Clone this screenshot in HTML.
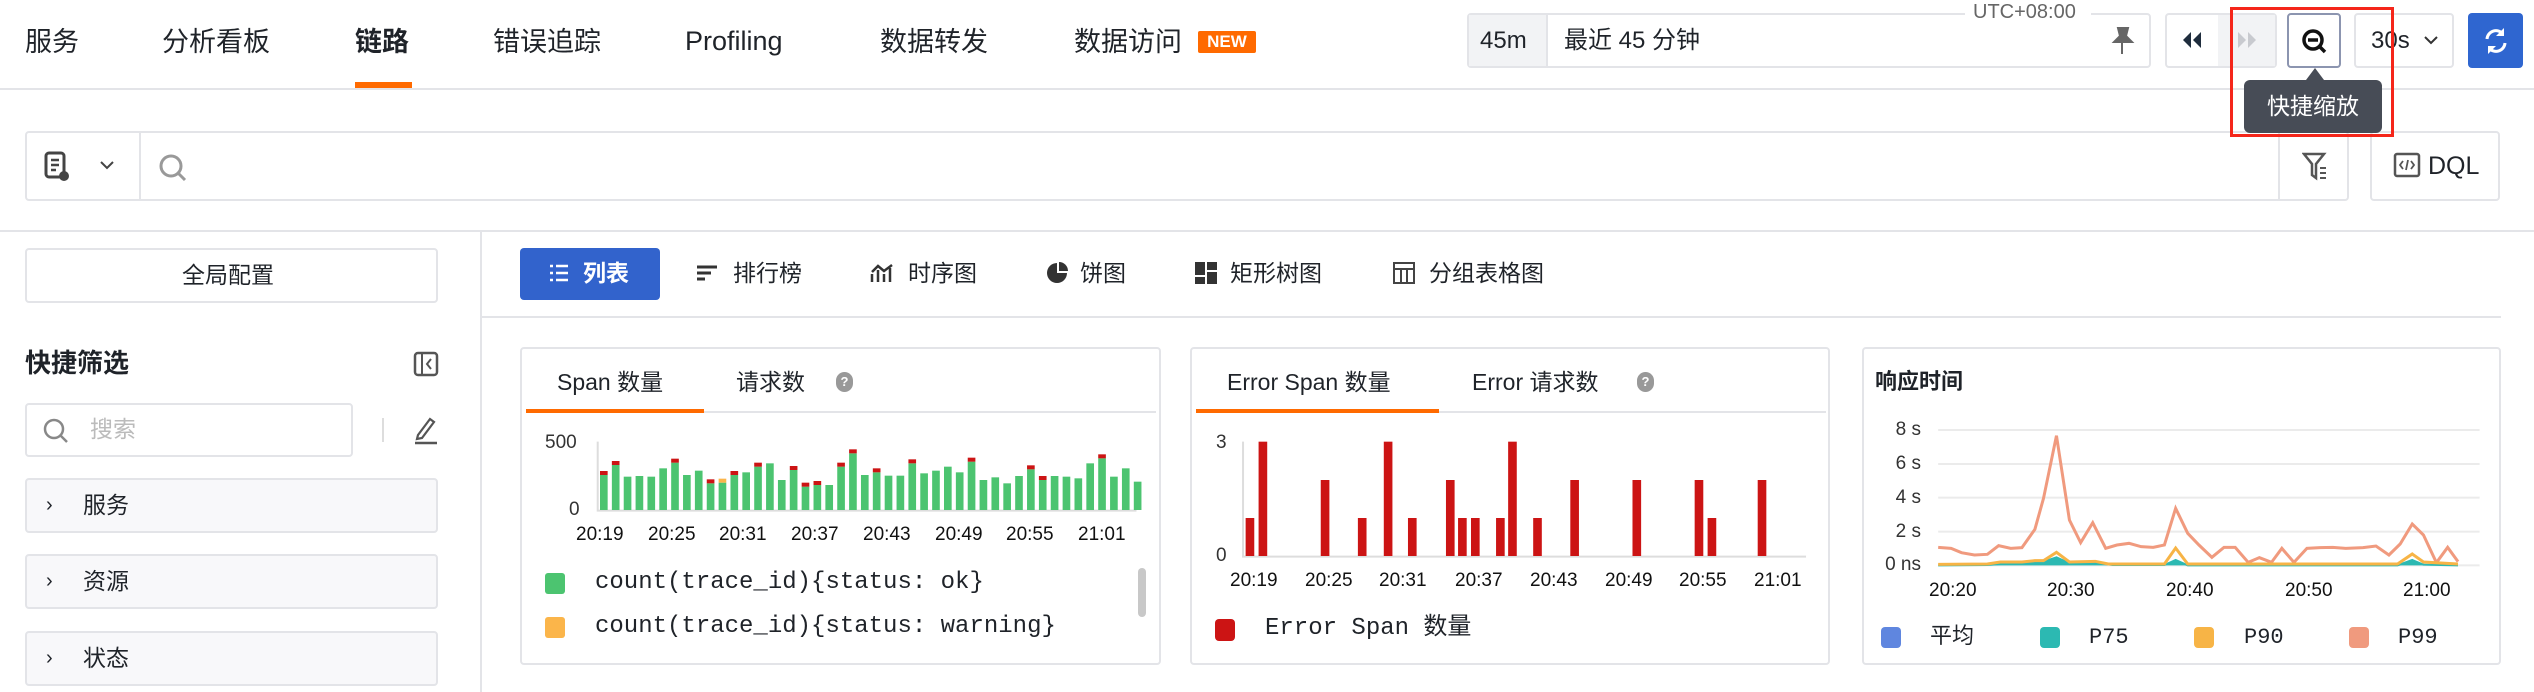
<!DOCTYPE html>
<html><head><meta charset="utf-8"><style>
*{margin:0;padding:0;box-sizing:border-box}
body{width:2534px;height:692px;overflow:hidden;background:#fff;position:relative;font-family:"Liberation Sans","Noto Sans CJK SC",sans-serif;color:#1f2329}
.a{position:absolute}
.t{position:absolute;white-space:nowrap;line-height:1}
.box{position:absolute;border:2px solid #e3e4e8;border-radius:4px;background:#fff}
.mono{font-family:"Liberation Mono","Noto Sans CJK SC",monospace}
</style></head><body>
<!-- top nav -->
<div class="t" style="left:25px;top:29px;font-size:27px">服务</div>
<div class="t" style="left:162px;top:29px;font-size:27px">分析看板</div>
<div class="t" style="left:355px;top:29px;font-size:27px;font-weight:bold">链路</div>
<div class="t" style="left:493px;top:29px;font-size:27px">错误追踪</div>
<div class="t" style="left:685px;top:28px;font-size:27px">Profiling</div>
<div class="t" style="left:880px;top:29px;font-size:27px">数据转发</div>
<div class="t" style="left:1074px;top:29px;font-size:27px">数据访问</div>
<div class="a" style="left:1198px;top:31px;width:58px;height:22px;background:#ff6a00;border-radius:2px;color:#fff;font-size:17px;font-weight:bold;text-align:center;line-height:22px">NEW</div>
<div class="a" style="left:355px;top:82px;width:57px;height:6px;background:#ff6a00"></div>
<div class="a" style="left:0;top:88px;width:2534px;height:2px;background:#e3e4e8"></div>

<!-- time picker -->
<div class="box" style="left:1467px;top:13px;width:684px;height:55px"></div>
<div class="a" style="left:1469px;top:15px;width:79px;height:51px;background:#f2f3f5;border-right:2px solid #e3e4e8"></div>
<div class="t" style="left:1480px;top:29px;font-size:24px">45m</div>
<div class="t" style="left:1564px;top:29px;font-size:24px">最近 45 分钟</div>
<div class="a" style="left:1965px;top:2px;width:126px;height:22px;background:#fff"></div>
<div class="t" style="left:1973px;top:2px;font-size:20px;color:#666">UTC+08:00</div>
<svg class="a" style="left:2110px;top:26px" width="26" height="30" viewBox="0 0 26 30"><path d="M8 2h10l-2 8 6 6H4l6-6z M12 16v12" fill="#666" stroke="#666" stroke-width="2"/></svg>
<div class="box" style="left:2165px;top:13px;width:112px;height:55px"></div>
<div class="a" style="left:2218px;top:15px;width:57px;height:51px;background:#f2f3f5"></div>
<svg class="a" style="left:2180px;top:32px" width="24" height="16"><path d="M11 0v16L3 8z M21 0v16L13 8z" fill="#1f2d3d"/></svg>
<svg class="a" style="left:2235px;top:32px" width="24" height="16"><path d="M3 0v16l8-8z M13 0v16l8-8z" fill="#c8cacf"/></svg>
<div class="a" style="left:2287px;top:13px;width:54px;height:55px;border:2px solid #8c95b0;border-radius:4px;background:#fff"></div>
<svg class="a" style="left:2301px;top:28px" width="28" height="28" viewBox="0 0 28 28"><circle cx="12" cy="12" r="9" fill="none" stroke="#111" stroke-width="3.5"/><path d="M7 12h10M18 18l6 6" stroke="#111" stroke-width="3.5"/></svg>
<div class="box" style="left:2354px;top:13px;width:100px;height:55px"></div>
<div class="t" style="left:2371px;top:29px;font-size:24px">30s</div>
<svg class="a" style="left:2424px;top:35px" width="14" height="10"><path d="M1 2l6 6 6-6" fill="none" stroke="#333" stroke-width="2"/></svg>
<div class="a" style="left:2468px;top:13px;width:55px;height:55px;background:#2f66d0;border-radius:4px"></div>
<svg class="a" style="left:2482px;top:26px" width="28" height="30" viewBox="0 0 28 30"><path d="M5 13a9 9 0 0 1 16-5M23 17a9 9 0 0 1-16 5" fill="none" stroke="#fff" stroke-width="3"/><path d="M22 2v8h-8z M6 28v-8h8z" fill="#fff"/></svg>

<!-- search -->
<div class="box" style="left:25px;top:131px;width:2324px;height:70px"></div>
<div class="a" style="left:139px;top:133px;width:2px;height:66px;background:#e3e4e8"></div>
<svg class="a" style="left:44px;top:151px" width="26" height="32" viewBox="0 0 26 32"><rect x="2" y="2" width="18" height="24" rx="3" fill="none" stroke="#444" stroke-width="3"/><path d="M7 9h8M7 14h8M7 19h5" stroke="#444" stroke-width="2.5"/><circle cx="20" cy="25" r="5" fill="#444"/></svg>
<svg class="a" style="left:100px;top:160px" width="14" height="10"><path d="M1 2l6 6 6-6" fill="none" stroke="#444" stroke-width="2"/></svg>
<svg class="a" style="left:157px;top:152px" width="32" height="32"><circle cx="14" cy="14" r="10" fill="none" stroke="#999" stroke-width="3"/><path d="M21 21l7 7" stroke="#999" stroke-width="3"/></svg>
<div class="a" style="left:2278px;top:133px;width:2px;height:66px;background:#e3e4e8"></div>
<svg class="a" style="left:2302px;top:152px" width="26" height="30"><path d="M2 2h20l-8 10v14l-4-3V12z" fill="none" stroke="#555" stroke-width="2.5"/><path d="M18 16h6M18 21h6M18 26h6" stroke="#555" stroke-width="2"/></svg>
<div class="box" style="left:2370px;top:131px;width:130px;height:70px"></div>
<svg class="a" style="left:2393px;top:152px" width="28" height="26"><rect x="2" y="2" width="24" height="22" rx="2" fill="none" stroke="#555" stroke-width="2.5"/><path d="M10 9l-3 4 3 4M18 9l3 4-3 4M15 8l-2 10" fill="none" stroke="#555" stroke-width="1.8"/></svg>
<div class="t" style="left:2428px;top:154px;font-size:25px">DQL</div>

<!-- tooltip + highlight (on top) -->
<div class="a" style="left:2306px;top:68px;width:0;height:0;border-left:9px solid transparent;border-right:9px solid transparent;border-bottom:12px solid #474c56;z-index:10"></div>
<div class="a" style="left:2244px;top:80px;width:138px;height:53px;background:#474c56;border-radius:6px;color:#fff;font-size:23px;text-align:center;line-height:53px;z-index:10">快捷缩放</div>
<div class="a" style="left:2230px;top:7px;width:164px;height:130px;border:3px solid #f5261a;z-index:11"></div>

<div class="a" style="left:0;top:230px;width:2534px;height:2px;background:#e3e4e8"></div>
<div class="a" style="left:480px;top:231px;width:2px;height:461px;background:#e3e4e8"></div>

<!-- sidebar -->
<div class="box" style="left:25px;top:248px;width:413px;height:55px"></div>
<div class="t" style="left:182px;top:264px;font-size:23px">全局配置</div>
<div class="t" style="left:25px;top:350px;font-size:26px;font-weight:bold">快捷筛选</div>
<svg class="a" style="left:413px;top:351px" width="26" height="26"><rect x="2" y="2" width="22" height="22" rx="3" fill="none" stroke="#555" stroke-width="2.5"/><path d="M9 2v22M18 8l-4 5 4 5" fill="none" stroke="#555" stroke-width="2"/></svg>
<div class="box" style="left:25px;top:403px;width:328px;height:54px"></div>
<svg class="a" style="left:42px;top:417px" width="28" height="28"><circle cx="12" cy="12" r="9" fill="none" stroke="#888" stroke-width="2.5"/><path d="M19 19l6 6" stroke="#888" stroke-width="2.5"/></svg>
<div class="t" style="left:90px;top:418px;font-size:23px;color:#bbb">搜索</div>
<div class="a" style="left:382px;top:418px;width:2px;height:24px;background:#ddd"></div>
<svg class="a" style="left:412px;top:415px" width="28" height="30"><path d="M6 20L18 4l4 3L10 23l-5 1z" fill="none" stroke="#555" stroke-width="2.2"/><path d="M3 28h22" stroke="#555" stroke-width="2.5"/></svg>
<div class="box" style="left:25px;top:478px;width:413px;height:55px;background:#f8f8fa"></div>
<div class="t" style="left:46px;top:495px;font-size:20px">›</div>
<div class="t" style="left:83px;top:494px;font-size:23px">服务</div>
<div class="box" style="left:25px;top:554px;width:413px;height:55px;background:#f8f8fa"></div>
<div class="t" style="left:46px;top:571px;font-size:20px">›</div>
<div class="t" style="left:83px;top:570px;font-size:23px">资源</div>
<div class="box" style="left:25px;top:631px;width:413px;height:55px;background:#f8f8fa"></div>
<div class="t" style="left:46px;top:648px;font-size:20px">›</div>
<div class="t" style="left:83px;top:647px;font-size:23px">状态</div>

<!-- view tabs -->
<div class="a" style="left:520px;top:248px;width:140px;height:52px;background:#3263cc;border-radius:4px"></div>
<svg class="a" style="left:549px;top:263px" width="20" height="20"><path d="M1 3h3M7 3h12M1 10h3M7 10h12M1 17h3M7 17h12" stroke="#fff" stroke-width="2.5"/></svg>
<div class="t" style="left:583px;top:262px;font-size:23px;color:#fff;font-weight:bold">列表</div>
<svg class="a" style="left:697px;top:264px" width="22" height="20"><path d="M0 3h20M0 9h14M0 15h8" stroke="#333" stroke-width="3"/></svg>
<div class="t" style="left:733px;top:262px;font-size:23px">排行榜</div>
<svg class="a" style="left:870px;top:262px" width="24" height="22"><path d="M2 20V12M8 20V8M14 20V12M20 20V6M2 10l6-6 6 5 8-6" fill="none" stroke="#333" stroke-width="2.5"/></svg>
<div class="t" style="left:908px;top:262px;font-size:23px">时序图</div>
<svg class="a" style="left:1046px;top:262px" width="22" height="22"><path d="M11 1a10 10 0 1 0 10 10H11z" fill="#333"/><path d="M13 0a9 9 0 0 1 9 9h-9z" fill="#333"/></svg>
<div class="t" style="left:1080px;top:262px;font-size:23px">饼图</div>
<svg class="a" style="left:1195px;top:262px" width="22" height="22"><rect x="0" y="0" width="10" height="13" fill="#333"/><rect x="12" y="0" width="10" height="8" fill="#333"/><rect x="0" y="15" width="10" height="7" fill="#333"/><rect x="12" y="10" width="10" height="12" fill="#333"/></svg>
<div class="t" style="left:1230px;top:262px;font-size:23px">矩形树图</div>
<svg class="a" style="left:1393px;top:262px" width="22" height="22"><rect x="1" y="1" width="20" height="20" fill="none" stroke="#444" stroke-width="2"/><path d="M1 7h20M8 7v14M14 7v14" stroke="#444" stroke-width="2"/></svg>
<div class="t" style="left:1429px;top:262px;font-size:23px">分组表格图</div>
<div class="a" style="left:482px;top:316px;width:2019px;height:2px;background:#e3e4e8"></div>

<!-- card 1 -->
<div class="box" style="left:520px;top:347px;width:641px;height:318px"></div>
<div class="t" style="left:557px;top:371px;font-size:23px">Span 数量</div>
<div class="t" style="left:736px;top:371px;font-size:23px">请求数</div>
<div class="a" style="left:836px;top:372px;width:17px;height:20px;border-radius:9px;background:#999;color:#fff;font-size:13px;text-align:center;line-height:20px;font-weight:bold">?</div>
<div class="a" style="left:526px;top:411px;width:630px;height:2px;background:#e3e4e8"></div>
<div class="a" style="left:526px;top:409px;width:178px;height:4px;background:#ff6a00"></div>
<div class="t" style="left:545px;top:433px;font-size:19px;color:#333">500</div>
<div class="t" style="left:569px;top:500px;font-size:19px;color:#333">0</div>
<svg class="a" style="left:0;top:220px" width="1200" height="472" viewBox="0 0 1568 1416" preserveAspectRatio="none">
<path d="M781 665V872H1485" fill="none" stroke="#ddd" vector-effect="non-scaling-stroke" stroke-width="2"/>
<g id="bars1"></g>
</svg>
<div class="t" style="left:576px;top:525px;font-size:19px;color:#111"><span style="position:absolute;left:0">20:19</span><span style="position:absolute;left:72px">20:25</span><span style="position:absolute;left:143px">20:31</span><span style="position:absolute;left:215px">20:37</span><span style="position:absolute;left:287px">20:43</span><span style="position:absolute;left:359px">20:49</span><span style="position:absolute;left:430px">20:55</span><span style="position:absolute;left:502px">21:01</span></div>
<div class="a" style="left:545px;top:573px;width:20px;height:21px;border-radius:3px;background:#4cc470"></div>
<div class="t mono" style="left:595px;top:571px;font-size:24px">count(trace_id){status: ok}</div>
<div class="a" style="left:545px;top:617px;width:20px;height:21px;border-radius:3px;background:#fbb54a"></div>
<div class="t mono" style="left:595px;top:615px;font-size:24px">count(trace_id){status: warning}</div>
<div class="a" style="left:1138px;top:568px;width:8px;height:49px;border-radius:4px;background:#c8c8c8"></div>

<!-- card 2 -->
<div class="box" style="left:1190px;top:347px;width:640px;height:318px"></div>
<div class="t" style="left:1227px;top:371px;font-size:23px">Error Span 数量</div>
<div class="t" style="left:1472px;top:371px;font-size:23px">Error 请求数</div>
<div class="a" style="left:1637px;top:372px;width:17px;height:20px;border-radius:9px;background:#999;color:#fff;font-size:13px;text-align:center;line-height:20px;font-weight:bold">?</div>
<div class="a" style="left:1196px;top:411px;width:630px;height:2px;background:#e3e4e8"></div>
<div class="a" style="left:1196px;top:409px;width:243px;height:4px;background:#ff6a00"></div>
<div class="t" style="left:1216px;top:433px;font-size:19px;color:#333">3</div>
<div class="t" style="left:1216px;top:546px;font-size:19px;color:#333">0</div>
<svg class="a" style="left:1180px;top:220px" width="1354" height="472" viewBox="0 0 1568 1416" preserveAspectRatio="none">
<path d="M73 665V1010H725" fill="none" stroke="#ddd" vector-effect="non-scaling-stroke" stroke-width="2"/>
<g fill="#cc1414">
<rect x="76" y="894" width="10" height="114"/><rect x="91" y="665" width="10" height="343"/><rect x="163" y="780" width="10" height="228"/><rect x="206" y="894" width="10" height="114"/><rect x="236" y="665" width="10" height="343"/><rect x="264" y="894" width="10" height="114"/><rect x="308" y="780" width="10" height="228"/><rect x="322" y="894" width="10" height="114"/><rect x="337" y="894" width="10" height="114"/><rect x="366" y="894" width="10" height="114"/><rect x="380" y="665" width="10" height="343"/><rect x="409" y="894" width="10" height="114"/><rect x="452" y="780" width="10" height="228"/><rect x="524" y="780" width="10" height="228"/><rect x="596" y="780" width="10" height="228"/><rect x="611" y="894" width="10" height="114"/><rect x="669" y="780" width="10" height="228"/>
</g></svg>
<div class="t" style="left:1230px;top:571px;font-size:19px;color:#111"><span style="position:absolute;left:0">20:19</span><span style="position:absolute;left:75px">20:25</span><span style="position:absolute;left:149px">20:31</span><span style="position:absolute;left:225px">20:37</span><span style="position:absolute;left:300px">20:43</span><span style="position:absolute;left:375px">20:49</span><span style="position:absolute;left:449px">20:55</span><span style="position:absolute;left:524px">21:01</span></div>
<div class="a" style="left:1215px;top:619px;width:20px;height:22px;border-radius:4px;background:#cc1414"></div>
<div class="t mono" style="left:1265px;top:617px;font-size:24px">Error Span 数量</div>

<!-- card 3 -->
<div class="box" style="left:1862px;top:347px;width:639px;height:318px"></div>
<div class="t" style="left:1875px;top:371px;font-size:22px;font-weight:bold">响应时间</div>
<div class="t" style="left:1893px;top:420px;font-size:19px;color:#333;text-align:right;width:28px">8 s</div>
<div class="t" style="left:1893px;top:454px;font-size:19px;color:#333;text-align:right;width:28px">6 s</div>
<div class="t" style="left:1893px;top:488px;font-size:19px;color:#333;text-align:right;width:28px">4 s</div>
<div class="t" style="left:1893px;top:522px;font-size:19px;color:#333;text-align:right;width:28px">2 s</div>
<div class="t" style="left:1876px;top:555px;font-size:19px;color:#333;text-align:right;width:45px">0 ns</div>
<svg class="a" style="left:1180px;top:220px" width="1354" height="472" viewBox="0 0 1568 1416" preserveAspectRatio="none">
<path d="M878 630H1505M878 732H1505M878 833H1505M878 935H1505M878 1036H1505" stroke="#ebebeb" stroke-width="2" vector-effect="non-scaling-stroke"/>
<path d="M878 982L893 985L905 998L920 1005L935 1003L948 977L962 985L975 983L990 928L1000 835L1015 647L1030 900L1043 968L1057 908L1072 985L1085 975L1099 970L1113 980L1127 982L1140 975L1153 865L1167 940L1180 975L1195 1012L1209 982L1222 982L1237 1027L1250 1013L1264 1027L1276 985L1290 1027L1305 985L1320 983L1335 982L1350 985L1370 983L1385 978L1400 1005L1413 972L1427 912L1440 945L1455 1028L1468 982L1480 1025" fill="none" stroke="#f09a7e" stroke-width="3" vector-effect="non-scaling-stroke"/>
<path d="M878 1036L935 1035L960 1030L1000 1025L1015 1012L1030 1030L1060 1028L1080 1035L1140 1035L1153 1020L1167 1036L1410 1036L1427 1020L1440 1034L1480 1036" fill="#2cb9b2" stroke="#2cb9b2" stroke-width="2" vector-effect="non-scaling-stroke"/>
<path d="M878 1033L935 1032L950 1026L975 1026L990 1022L1000 1022L1015 997L1030 1026L1060 1024L1075 1032L1140 1032L1153 984L1167 1032L1410 1032L1427 1002L1440 1026L1480 1032" fill="none" stroke="#f7b446" stroke-width="3" vector-effect="non-scaling-stroke"/>
</svg>
<div class="t" style="left:1929px;top:581px;font-size:19px;color:#111"><span style="position:absolute;left:0">20:20</span><span style="position:absolute;left:118px">20:30</span><span style="position:absolute;left:237px">20:40</span><span style="position:absolute;left:356px">20:50</span><span style="position:absolute;left:474px">21:00</span></div>
<div class="a" style="left:1881px;top:627px;width:20px;height:21px;border-radius:4px;background:#5f86df"></div>
<div class="t mono" style="left:1930px;top:627px;font-size:22px">平均</div>
<div class="a" style="left:2040px;top:627px;width:20px;height:21px;border-radius:4px;background:#2cb9b2"></div>
<div class="t mono" style="left:2089px;top:627px;font-size:22px">P75</div>
<div class="a" style="left:2194px;top:627px;width:20px;height:21px;border-radius:4px;background:#f7b446"></div>
<div class="t mono" style="left:2244px;top:627px;font-size:22px">P90</div>
<div class="a" style="left:2349px;top:627px;width:20px;height:21px;border-radius:4px;background:#f09a7e"></div>
<div class="t mono" style="left:2398px;top:627px;font-size:22px">P99</div>

<script>
var tops=[765,735,770,768,770,745,728,765,752,790,788,765,757,740,730,780,750,800,795,795,740,700,765,757,767,767,730,760,752,740,757,725,780,772,790,768,748,780,768,770,775,730,715,770,745,785];
var red={0:1,1:1,6:1,9:1,11:1,13:1,16:1,17:1,18:1,20:1,21:1,23:1,26:1,31:1,36:1,37:1,42:1};
var s='';
for(var i=0;i<tops.length;i++){var x=784+i*15.5;var t=tops[i];
s+='<rect x="'+x+'" y="'+t+'" width="10" height="'+(870-t)+'" fill="#4cc470"/>';
if(red[i])s+='<rect x="'+x+'" y="'+(t-12)+'" width="10" height="12" fill="#cc1414"/>';
if(i==10)s+='<rect x="'+x+'" y="'+(t-12)+'" width="10" height="12" fill="#fbb54a"/>';}
document.getElementById('bars1').innerHTML=s;
</script>
</body></html>
